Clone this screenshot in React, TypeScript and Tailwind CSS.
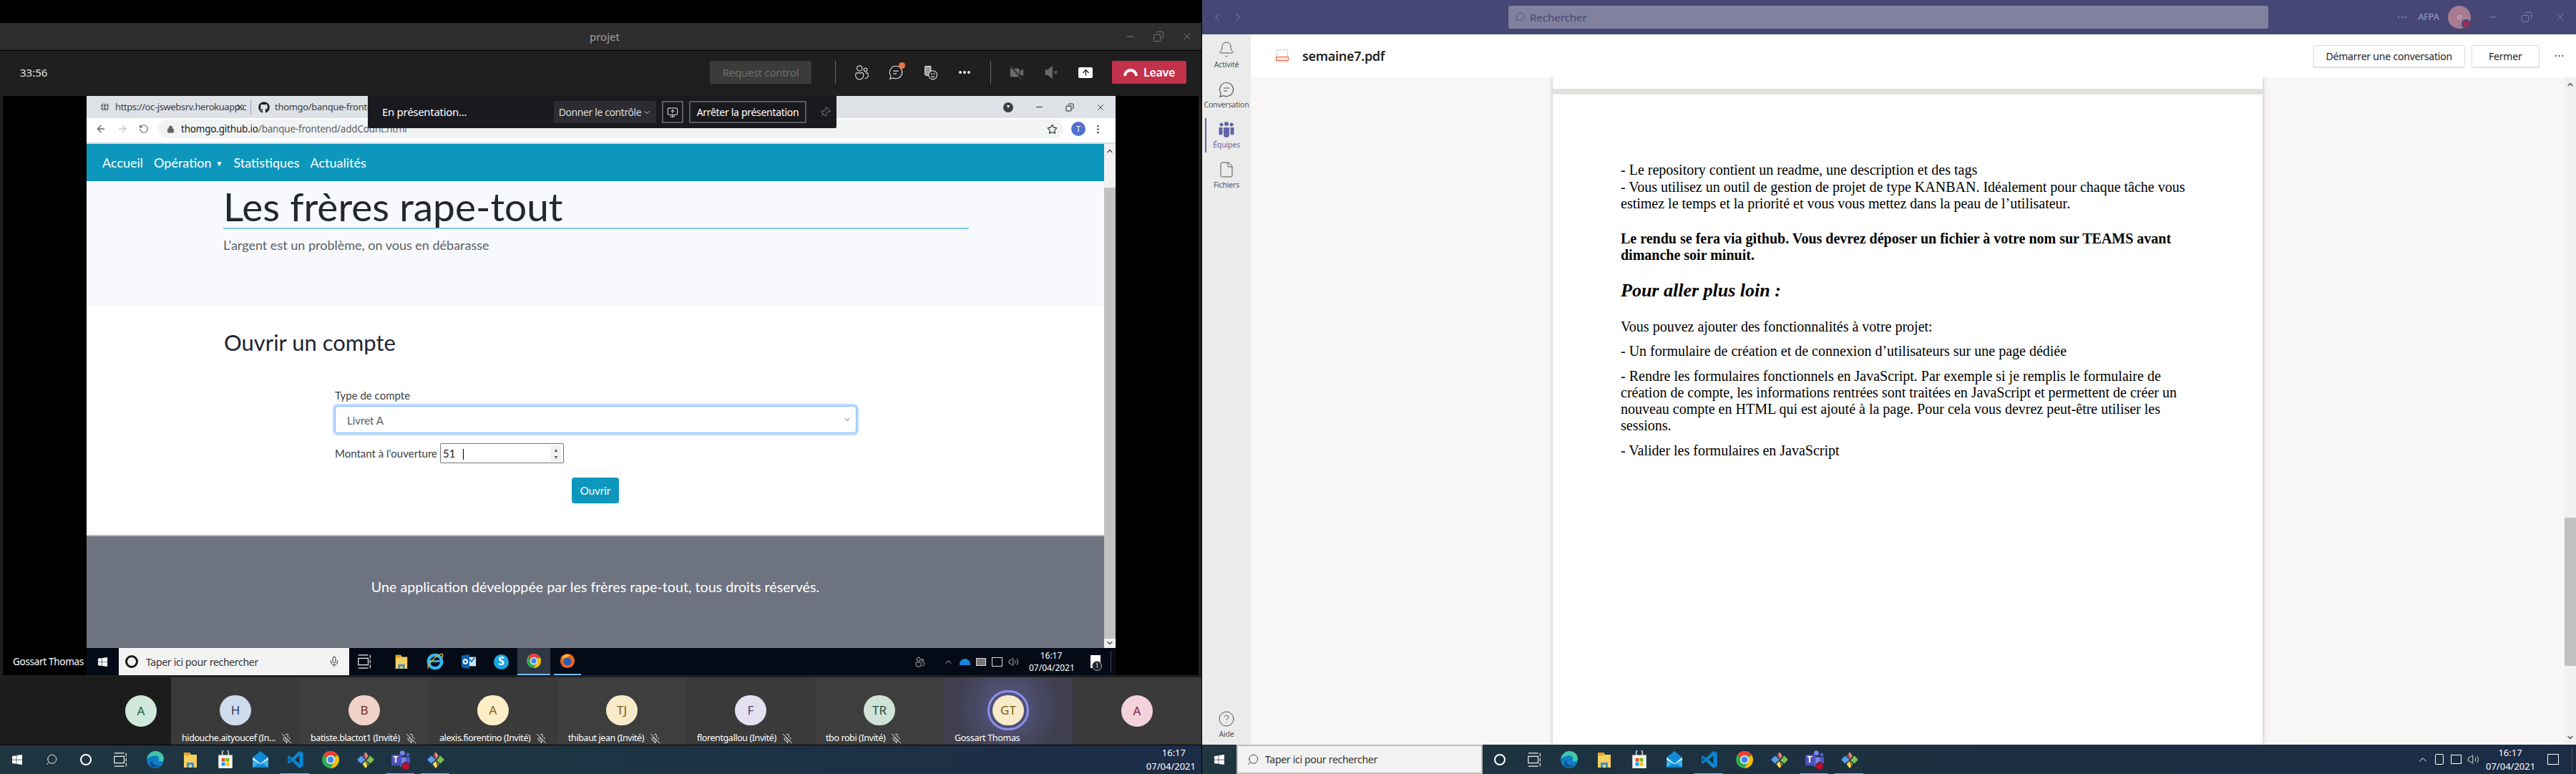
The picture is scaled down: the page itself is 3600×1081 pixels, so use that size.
import {
  ArrowLeft,
  ArrowRight,
  ArrowUp,
  Bell,
  ChevronDown,
  ChevronLeft,
  ChevronRight,
  ChevronUp,
  CircleHelp,
  Copy,
  EllipsisVertical,
  File,
  Globe,
  Lock,
  Mic,
  MicOff,
  Minus,
  MonitorUp,
  Pin,
  RotateCw,
  Search,
  Star,
  Volume2,
  X,
} from 'lucide-react';
import { FaGithub, FaWindows } from 'react-icons/fa';

type IconProps = { s?: number };

function PeopleIcon({ s = 22 }: IconProps) {
  return (
    <svg viewBox="0 0 24 24" width={s} height={s} fill="none" stroke="currentColor" strokeWidth="1.200">
      <circle cx="9" cy="6" r="4" />
      <circle cx="18" cy="8" r="2.500" />
      <path d="M3 15a2 2 0 0 1 2-2h8a2 2 0 0 1 2 2v2a6 6 0 0 1-12 0z" />
      <path d="M18 13h2.500a1.500 1.500 0 0 1 1.500 1.500V17a4 4 0 0 1-5 4" />
    </svg>
  );
}

function ChatIcon({ s = 22 }: IconProps) {
  return (
    <svg viewBox="0 0 24 24" width={s} height={s} fill="none" stroke="currentColor" strokeWidth="1.200">
      <path d="M12 2.500a9.500 9.500 0 1 1-4 18.100L3 22l1.400-4.500A9.500 9.500 0 0 1 12 2.500z" />
      <path d="M8 10h8M8 14h5" />
    </svg>
  );
}

function HandSmileIcon({ s = 22 }: IconProps) {
  return (
    <svg viewBox="0 0 24 24" width={s} height={s} fill="none" stroke="#e8e8e8" strokeWidth="1.200">
      <path d="M4 4a1.500 1.500 0 0 1 3 0 1.500 1.500 0 0 1 3 0 1.500 1.500 0 0 1 3 0v9a5 5 0 0 1-9 2z" fill="#9a9a9a" />
      <circle cx="16" cy="16" r="6.500" fill="#1f1f1f" />
      <circle cx="14" cy="14.500" r="0.500" />
      <circle cx="18" cy="14.500" r="0.500" />
      <path d="M13.500 18c1.500 1.200 3.500 1.200 5 0" />
    </svg>
  );
}

function CamOffIcon({ s = 22 }: IconProps) {
  return (
    <svg viewBox="0 0 24 24" width={s} height={s}>
      <rect x="2" y="6" width="14" height="13" rx="2" fill="#6a6a6a" />
      <path d="M17 10l5-3v11l-5-3z" fill="#6a6a6a" />
      <path d="M3 3l17 20" stroke="#1f1f1f" strokeWidth="2.400" />
      <path d="M2.500 3l17 20" stroke="#777" strokeWidth="0.900" />
    </svg>
  );
}

function SpeakerOffIcon({ s = 22 }: IconProps) {
  return (
    <svg viewBox="0 0 24 24" width={s} height={s}>
      <path d="M3 8h4l7-6v20l-7-6H3z" fill="#6a6a6a" />
      <path d="M17 10l4 4M21 10l-4 4" stroke="#777" strokeWidth="1.400" />
    </svg>
  );
}

function TeamGlyph({ s = 22 }: IconProps) {
  return (
    <svg viewBox="0 0 24 24" width={s} height={s} fill="#6264a7">
      <circle cx="5" cy="5" r="2.500" />
      <circle cx="12" cy="4" r="3" />
      <circle cx="19" cy="5" r="2.500" />
      <path d="M1.500 9h5v8a2.500 2.500 0 0 1-5 0z" />
      <path d="M8 9h8v10a4 4 0 0 1-8 0z" />
      <path d="M17.500 9h5v8a2.500 2.500 0 0 1-5 0z" />
    </svg>
  );
}

function ChromeIcon({ s = 24 }: IconProps) {
  return (
    <svg viewBox="0 0 24 24" width={s} height={s}>
      <circle cx="12" cy="12" r="11" fill="#34a853" />
      <path d="M12 1a11 11 0 0 1 9.500 5.500H12a5.500 5.500 0 0 0-5 3.200L3.300 5A11 11 0 0 1 12 1z" fill="#ea4335" />
      <path d="M21.500 6.500A11 11 0 0 1 12 23l4.700-8.200A5.500 5.500 0 0 0 16.800 9L21.500 6.500z" fill="#fbbc05" />
      <circle cx="12" cy="12" r="5.600" fill="#fff" />
      <circle cx="12" cy="12" r="4.200" fill="#4285f4" />
    </svg>
  );
}

function EdgeIcon({ s = 26 }: IconProps) {
  return (
    <svg viewBox="0 0 24 24" width={s} height={s}>
      <circle cx="12" cy="12" r="11" fill="#0f7cc4" />
      <path d="M1 12C2 5 8 1 12 1c6 0 11 4 11 10 0 3-3 4-6 3-1-2 0-3 0-4-1-3-4-4-7-3-5 1-8 3-9 5z" fill="#40c8a8" />
      <path d="M8 13c0 5 5 8 10 6-4 4-10 4-12 0-1-2 0-5 2-6z" fill="#0a4f8f" />
    </svg>
  );
}

function FolderIcon({ s = 24 }: IconProps) {
  return (
    <svg viewBox="0 0 24 24" width={s} height={s}>
      <path d="M3 2h8l2 3h8v18H3z" fill="#f6cf5e" />
      <path d="M3 2h8v4H3z" fill="#e0a325" />
      <path d="M7 23v-7h10v7h-3v-4h-4v4z" fill="#3b8ed0" />
    </svg>
  );
}

function StoreIcon({ s = 26 }: IconProps) {
  return (
    <svg viewBox="0 0 24 24" width={s} height={s}>
      <path d="M8 7V3a4 4 0 0 1 8 0v4" fill="none" stroke="#c8c8c8" strokeWidth="1.600" />
      <path d="M3 6h18v17H3z" fill="#f5f5f5" />
      <path d="M7 10h4.500v4.500H7z" fill="#f25022" />
      <path d="M12.500 10H17v4.500h-4.500z" fill="#7fba00" />
      <path d="M7 15.500h4.500V20H7z" fill="#00a4ef" />
      <path d="M12.500 15.500H17V20h-4.500z" fill="#ffb900" />
    </svg>
  );
}

function MailIcon({ s = 26 }: IconProps) {
  return (
    <svg viewBox="0 0 24 24" width={s} height={s}>
      <path d="M2 9l10-8 10 8v13H2z" fill="#0f8ad8" />
      <path d="M2 9l10 8 10-8v3l-10 6-10-6z" fill="#e8f6ff" />
      <path d="M2 12l7 5-7 5zM22 12l-7 5 7 5z" fill="#3db4f0" />
    </svg>
  );
}

function CodeIcon({ s = 26 }: IconProps) {
  return (
    <svg viewBox="0 0 24 24" width={s} height={s}>
      <path d="M17 1l5 2.500v17L17 23 7.500 14l-4 3L2 16V8l1.500-1 4 3z" fill="#0e84d0" />
      <path d="M17 7l-6 5 6 5z" fill="#1c2f3d" />
      <path d="M3.500 9.500L6 12l-2.500 2.500z" fill="#1c2f3d" />
    </svg>
  );
}

function GitIcon({ s = 26 }: IconProps) {
  return (
    <svg viewBox="0 0 24 24" width={s} height={s}>
      <path d="M12 2l3.500 5-3.500 5-3.500-5z" fill="#f07f7f" />
      <path d="M1 12l5-5 6 5-6 5z" fill="#5b9cf0" />
      <path d="M23 12l-5-5-6 5 6 5z" fill="#7cc24d" />
      <path d="M12 12l4 6-4 5-4-5z" fill="#f2d94e" />
      <path d="M9 3l6 18M16 9l-6 6" stroke="#3a3a3a" strokeWidth="1.200" />
    </svg>
  );
}

function TeamsIcon({ s = 28 }: IconProps) {
  return (
    <div className="relative" style={{ width: s, height: s }}>
      <svg viewBox="0 0 24 24" width={s} height={s}>
        <circle cx="14" cy="4" r="3" fill="#7b83eb" />
        <circle cx="20.500" cy="6" r="2.200" fill="#5059c9" />
        <path d="M11 9h7v10a4 4 0 0 1-7 0z" fill="#7b83eb" />
        <path d="M18 9h5v7a3 3 0 0 1-5 1z" fill="#5059c9" />
        <path d="M1 6h12v13H1z" fill="#4b53bc" />
      </svg>
      <span className="absolute left-[4px] top-[7px] text-[12px] leading-[14px] font-bold text-white">T</span>
      <span className="absolute right-[1px] bottom-[-1px] h-[12px] w-[12px] rounded-full bg-[#b80e2f] border border-[#1c2f3d]" />
    </div>
  );
}

function FirefoxIcon({ s = 24 }: IconProps) {
  return (
    <svg viewBox="0 0 24 24" width={s} height={s}>
      <circle cx="12" cy="12" r="11" fill="#e8632a" />
      <circle cx="12" cy="13" r="6" fill="#2d5bb0" />
      <path d="M4 6c3-4 9-5 13-2-3 0-5 1-6 3-3 0-6 0-7 3z" fill="#f7b733" />
    </svg>
  );
}

function IeIcon({ s = 26 }: IconProps) {
  return (
    <svg viewBox="0 0 24 24" width={s} height={s}>
      <circle cx="12" cy="12" r="8.500" fill="none" stroke="#37b6ee" strokeWidth="4" />
      <path d="M5 11.500h15" stroke="#37b6ee" strokeWidth="2.500" />
      <path d="M3 21C1 18 12 4 21 2c2 1 1 4-1 6" fill="none" stroke="#e6b93c" strokeWidth="1.300" />
    </svg>
  );
}

function OutlookIcon({ s = 24 }: IconProps) {
  return (
    <svg viewBox="0 0 24 24" width={s} height={s}>
      <path d="M10 5h13v14H10z" fill="#cfe6f8" />
      <path d="M12 8l4.500 4 4.500-6" fill="none" stroke="#0f6cbd" strokeWidth="2" />
      <path d="M1 3l12-2v22L1 21z" fill="#0f62b0" />
      <circle cx="7" cy="12" r="3" fill="none" stroke="#fff" strokeWidth="2" />
    </svg>
  );
}

function SkypeIcon({ s = 24 }: IconProps) {
  return (
    <div className="flex items-center justify-center rounded-full bg-[#18a7e0] text-white font-bold" style={{ width: s, height: s, fontSize: s * 0.75 }}>
      S
    </div>
  );
}

function TaskViewIcon() {
  return (
    <svg viewBox="0 0 24 24" width="22" height="22" fill="none" stroke="#f0f0f0" strokeWidth="1.300">
      <path d="M3 2h15M3 22h15M3 7h15v10H3zM21 2v5M21 9.500v5M21 17v5" />
    </svg>
  );
}

function TileMic() {
  return <MicOff size={15} className="shrink-0 text-[#e8e8e8]" strokeWidth={1.6} />;
}

const PEOPLE = [
  { name: 'hidouche.aityoucef (In...', short: 'H', bg: 'bg-[#cfdcec]', fg: 'text-[#243a5e]', tile: 'bg-[#3a3a3a]', mic: true },
  { name: 'batiste.blactot1 (Invité)', short: 'B', bg: 'bg-[#f0d2c9]', fg: 'text-[#6e2b1c]', tile: 'bg-[#3e3e3e]', mic: true },
  { name: 'alexis.fiorentino (Invité)', short: 'A', bg: 'bg-[#fbeec6]', fg: 'text-[#7d5c17]', tile: 'bg-[#3a3a3a]', mic: true },
  { name: 'thibaut jean (Invité)', short: 'TJ', bg: 'bg-[#f8ebc9]', fg: 'text-[#7d5c17]', tile: 'bg-[#3e3e3e]', mic: true },
  { name: 'florentgallou (Invité)', short: 'F', bg: 'bg-[#e3e0f0]', fg: 'text-[#4d4374]', tile: 'bg-[#3a3a3a]', mic: true },
  { name: 'tbo robi (Invité)', short: 'TR', bg: 'bg-[#d0e1d8]', fg: 'text-[#1f4f3c]', tile: 'bg-[#3e3e3e]', mic: true },
];

const PDF_TEXT = "font-['Liberation_Serif',serif] text-[20px] leading-[23px] text-black";

function LeftWindow() {
  return (
    <div className="flex h-full w-[1680px] shrink-0 flex-col bg-[#1f1f1f] border-r border-black">
      <div className="h-[32px] shrink-0 bg-black" />

      {/* title bar */}
      <div className="flex h-[39px] shrink-0 items-center border-b border-black bg-[#2d2d2d] pl-[824px] pr-[12px] text-[#a0a0a0]">
        <span className="text-[15px]">projet</span>
        <div className="ml-auto flex items-center gap-[24px]">
          <Minus size={16} strokeWidth={1} />
          <Copy size={16} strokeWidth={1} className="-scale-x-100" />
          <X size={16} strokeWidth={1} />
        </div>
      </div>

      {/* meeting toolbar */}
      <div className="flex h-[60px] shrink-0 items-center pl-[28px] text-white">
        <span className="w-[964px] text-[15px] text-[#e6e6e6]">33:56</span>
        <div className="flex h-[32px] w-[142px] items-center justify-center rounded-[2px] bg-[#3b3b3b] text-[15px] tracking-[-0.3px] text-[#6e6e6e]">
          Request control
        </div>
        <div className="ml-[33px] h-[32px] w-px shrink-0 bg-[#6b6b6b]" />
        <div className="ml-[12px] flex items-center text-[#e0e0e0]">
          <div className="flex w-[48px] justify-center"><PeopleIcon /></div>
          <div className="relative flex w-[48px] justify-center">
            <ChatIcon />
            <span className="absolute right-[11px] -top-[3px] h-[9px] w-[9px] rounded-full bg-[#e97548]" />
          </div>
          <div className="flex w-[48px] justify-center"><HandSmileIcon /></div>
          <div className="flex w-[48px] justify-center gap-[2px]">
            <span className="h-[4px] w-[4px] rounded-full bg-[#e8e8e8]" />
            <span className="h-[4px] w-[4px] rounded-full bg-[#e8e8e8]" />
            <span className="h-[4px] w-[4px] rounded-full bg-[#e8e8e8]" />
          </div>
        </div>
        <div className="ml-[12px] h-[32px] w-px shrink-0 bg-[#6b6b6b]" />
        <div className="ml-[12px] flex items-center">
          <div className="flex w-[48px] justify-center"><CamOffIcon /></div>
          <div className="flex w-[48px] justify-center"><SpeakerOffIcon /></div>
          <div className="flex w-[48px] justify-center">
            <div className="flex h-[15px] w-[20px] items-center justify-center rounded-[2px] bg-white text-black">
              <ArrowUp size={13} strokeWidth={2} />
            </div>
          </div>
        </div>
        <div className="ml-[13px] flex h-[32px] w-[104px] items-center justify-center gap-[8px] rounded-[2px] bg-[#c4314b] text-[16px] font-semibold tracking-[-0.3px] text-white">
          <span className="h-[10px] w-[20px] rounded-t-full border-[4px] border-b-0 border-white" />
          Leave
        </div>
      </div>

      <div className="h-[3px] shrink-0" />

      {/* shared screen */}
      <div className="relative flex h-[809px] shrink-0 bg-black ml-[4px] mr-[4px]">
        <div className="flex w-[117px] shrink-0 items-end pb-[10px] pl-[14px]">
          <span className="text-[13.500px] leading-[18px] tracking-[-0.3px] whitespace-nowrap text-white">Gossart Thomas</span>
        </div>
        <SharedBrowser />
        <PresenterBar />
      </div>

      <div className="h-[3px] shrink-0" />

      {/* participants */}
      <div className="flex h-[94px] shrink-0 bg-[#1c1c1c] text-white">
        <div className="flex w-[239px] shrink-0 justify-end pr-[20px] pt-[25px]">
          <div className="flex h-[44px] w-[44px] items-center justify-center rounded-full bg-[#d0e8dc] text-[17px] text-[#23563f]">A</div>
        </div>
        {PEOPLE.map((p) => (
          <div key={p.name} className={`flex w-[180px] shrink-0 flex-col items-center pt-[25px] ${p.tile}`}>
            <div className={`flex h-[44px] w-[44px] items-center justify-center rounded-full text-[17px] ${p.bg} ${p.fg}`}>{p.short}</div>
            <div className="mt-[9px] flex w-full items-center gap-[8px] pl-[15px] text-[12.500px] leading-[18px] whitespace-nowrap tracking-[-0.4px]">
              <span>{p.name}</span>
              <TileMic />
            </div>
          </div>
        ))}
        <div className="relative flex w-[180px] shrink-0 flex-col items-center bg-[radial-gradient(circle_at_50%_45%,#5a5a88,#3f3f50_70%)] pt-[25px]">
          <div className="flex h-[44px] w-[44px] items-center justify-center rounded-full bg-[#f8ebc9] text-[17px] text-[#7d5c17] outline-[3px] outline-[#8e90f0] outline-offset-[4px]">GT</div>
          <div className="mt-[9px] w-full pl-[15px] text-[12.500px] leading-[18px] tracking-[-0.3px]">Gossart Thomas</div>
        </div>
        <div className="flex flex-1 justify-center bg-[#3a3a3a] pt-[25px]">
          <div className="flex h-[44px] w-[44px] items-center justify-center rounded-full bg-[#f4d2dc] text-[17px] text-[#7b1b3b]">A</div>
        </div>
      </div>

      <div className="h-px shrink-0 bg-black" />

      {/* local taskbar */}
      <div className="flex h-[40px] shrink-0 items-center bg-gradient-to-r from-[#1f3540] via-[#1d3444] to-[#1c2c47] text-white">
        <div className="flex w-[48px] justify-center"><FaWindows size={16} /></div>
        <div className="flex w-[48px] justify-center"><Search size={18} strokeWidth={1.2} className="-scale-x-100" /></div>
        <div className="flex w-[48px] justify-center"><span className="h-[16px] w-[16px] rounded-full border-[2px] border-white" /></div>
        <div className="flex w-[48px] justify-center"><TaskViewIcon /></div>
        <TaskIcons />
        <div className="ml-auto w-[90px] pr-[8px] text-right text-[13px] leading-[19px]">
          <div className="pr-[14px]">16:17</div>
          <div>07/04/2021</div>
        </div>
      </div>
    </div>
  );
}

function TaskIcons() {
  return (
    <div className="flex items-center">
      <div className="flex w-[49px] justify-center"><EdgeIcon /></div>
      <div className="flex w-[49px] justify-center"><FolderIcon /></div>
      <div className="flex w-[49px] justify-center"><StoreIcon /></div>
      <div className="flex w-[49px] justify-center"><MailIcon /></div>
      <div className="relative flex w-[49px] justify-center">
        <CodeIcon />
        <span className="absolute -bottom-[8px] left-[4px] h-[2px] w-[40px] bg-[#76b9ed]" />
      </div>
      <div className="flex w-[49px] justify-center"><ChromeIcon s={26} /></div>
      <div className="flex w-[49px] justify-center"><GitIcon /></div>
      <div className="relative flex w-[49px] justify-center">
        <TeamsIcon />
        <span className="absolute -bottom-[7px] left-[4px] h-[2px] w-[40px] bg-[#76b9ed]" />
      </div>
      <div className="relative flex w-[49px] justify-center">
        <GitIcon />
        <span className="absolute -bottom-[8px] left-[4px] h-[2px] w-[40px] bg-[#76b9ed]" />
      </div>
    </div>
  );
}

function SharedBrowser() {
  return (
    <div className="flex h-full w-[1438px] shrink-0 flex-col">
      {/* tabs */}
      <div className="flex h-[31px] shrink-0 items-center bg-[#dee1e6] pl-[18px] pr-[14px] text-[#3c4043]">
        <Globe size={15} fill="#5f6368" stroke="#dee1e6" />
        <span className="ml-[7px] w-[163px] whitespace-nowrap text-[13px] tracking-[-0.4px]">https://oc-jswebsrv.herokuapp.c</span>
        <X size={13} className="ml-[5px]" strokeWidth={2} />
        <div className="ml-[8px] h-[20px] w-px bg-[#9aa0a6]" />
        <FaGithub size={16} className="ml-[10px] text-[#202124]" />
        <span className="ml-[7px] text-[13px] tracking-[-0.3px]">thomgo/banque-frontend</span>
        <div className="ml-auto flex items-center gap-[30px] text-[#202124]">
          <span className="flex h-[14px] w-[14px] items-center justify-center rounded-full bg-[#3c4043] text-[7px] text-white">▼</span>
          <Minus size={13} />
          <Copy size={12} strokeWidth={2} className="-scale-x-100" />
          <X size={14} strokeWidth={1.4} />
        </div>
      </div>
      {/* address bar */}
      <div className="flex h-[30px] shrink-0 items-center bg-white pl-[12px] pr-[12px] text-[#5f6368]">
        <ArrowLeft size={16} />
        <ArrowRight size={16} className="ml-[14px] text-[#c4c7cc]" />
        <RotateCw size={14} className="ml-[15px] -scale-x-100" />
        <div className="ml-[13px] flex h-[26px] w-[1265px] items-center rounded-full bg-[#f1f3f4] pl-[12px] pr-[8px]">
          <Lock size={11} fill="#5f6368" />
          <span className="ml-[9px] text-[13.500px] tracking-[-0.2px] text-[#202124]">thomgo.github.io</span>
          <span className="text-[13.500px] tracking-[-0.2px] text-[#5f6368]">/banque-frontend/addCount.html</span>
          <Star size={15} className="ml-auto text-[#3c4043]" />
        </div>
        <div className="ml-[11px] flex h-[20px] w-[20px] items-center justify-center rounded-full bg-[#5470cf] text-[11px] text-white">T</div>
        <EllipsisVertical size={15} className="ml-[10px] text-[#3c4043]" />
      </div>
      <div className="h-[6px] shrink-0 bg-white border-b-[2px] border-[#cddfe6]" />

      <div className="flex h-[704px] shrink-0">
        <div className="flex w-[1422px] shrink-0 flex-col font-['Lato',sans-serif]">
          {/* site nav */}
          <div className="flex h-[52px] shrink-0 items-center gap-[15px] bg-[#0d97bd] pl-[22px] text-[18px] text-white">
            <span>Accueil</span>
            <span>Opération<span className="ml-[6px] text-[10px] align-[2px]">▼</span></span>
            <span>Statistiques</span>
            <span>Actualités</span>
          </div>
          {/* jumbotron */}
          <div className="h-[174px] shrink-0 bg-[#f8f9fc] pl-[191px] pt-[8px]">
            <div className="w-[1042px] border-b-[2px] border-[#7ccde0] pb-[3px] text-[55px] leading-[54px] text-[#23272e]">Les frères rape-tout</div>
            <div className="mt-[10px] text-[18px] leading-[24px] text-[#5a6068]">L'argent est un problème, on vous en débarasse</div>
          </div>
          {/* form */}
          <div className="h-[320px] shrink-0 bg-white pl-[192px] pt-[32px]">
            <div className="text-[31px] leading-[38px] text-[#1f2430]">Ouvrir un compte</div>
            <div className="mt-[44px] pl-[155px] font-['Lato',sans-serif] text-[#3d4248]">
              <div className="text-[15px] leading-[22px]">Type de compte</div>
              <div className="mt-[4px] flex h-[38px] w-[729px] items-center justify-between rounded-[4px] border border-[#80bdff] bg-white pl-[16px] pr-[6px] text-[15px] text-[#565c63] shadow-[0_0_0_3px_#bfdcff]">
                <span className="pt-[3px]">Livret A</span>
                <ChevronDown size={12} strokeWidth={2} />
              </div>
              <div className="mt-[14px] flex items-center gap-[4px] text-[15px]">
                <span>Montant à l'ouverture</span>
                <div className="relative flex h-[28px] w-[173px] items-center justify-between rounded-[2px] border border-[#767676] pl-[3px] pr-[3px] text-[#202124]">
                  51
                  <span className="flex h-[22px] w-[14px] flex-col items-center justify-center bg-[#f0f0f0] text-[7px] leading-[10px] text-[#505050]"><span>▲</span><span>▼</span></span>
                  <span className="absolute left-[31px] top-[7px] h-[15px] w-px bg-black" />
                </div>
              </div>
              <div className="ml-[331px] mt-[20px] flex h-[36px] w-[66px] items-center justify-center rounded-[4px] bg-[#0d97bd] text-[15px] text-white">Ouvrir</div>
            </div>
          </div>
          {/* footer */}
          <div className="flex h-[158px] shrink-0 items-center justify-center border-t-[2px] border-[#b4b8bd] bg-[#6e7380] text-[19.700px] text-white pb-[14px]">
            Une application développée par les frères rape-tout, tous droits réservés.
          </div>
        </div>
        {/* remote scrollbar */}
        <div className="flex w-[16px] shrink-0 flex-col items-center bg-[#f1f1f1] text-[#505050]">
          <ChevronUp size={12} strokeWidth={3} className="mt-[4px]" />
          <div className="mt-[45px] h-[630px] w-full shrink-0 bg-[#c1c1c1]" />
          <ChevronDown size={12} strokeWidth={3} />
        </div>
      </div>

      {/* remote taskbar */}
      <div className="flex h-[38px] shrink-0 items-center bg-[#050b16] text-white">
        <div className="flex w-[45px] justify-center"><FaWindows size={15} /></div>
        <div className="flex h-full w-[322px] items-center bg-[#f3f3f3] pl-[9px] pr-[13px] text-[#333]">
          <span className="h-[18px] w-[18px] rounded-full border-[3px] border-[#1a1a1a]" />
          <span className="ml-[11px] text-[14px] tracking-[-0.3px]">Taper ici pour rechercher</span>
          <Mic size={16} className="ml-auto" strokeWidth={1.5} />
        </div>
        <div className="flex w-[42px] justify-center"><TaskViewIcon /></div>
        <div className="ml-[8px] flex w-[46px] justify-center"><FolderIcon s={22} /></div>
        <div className="flex w-[47px] justify-center"><IeIcon /></div>
        <div className="flex w-[47px] justify-center"><OutlookIcon s={22} /></div>
        <div className="flex w-[45px] justify-center"><SkypeIcon s={21} /></div>
        <div className="flex h-full w-[46px] items-center justify-center border-b-[2px] border-[#76b9ed] bg-[#2f3744]"><ChromeIcon s={22} /></div>
        <div className="ml-[5px] flex h-full w-[38px] items-center justify-center border-b-[2px] border-[#76b9ed]"><FirefoxIcon s={22} /></div>
        <div className="ml-auto flex items-center gap-[8px] pr-[6px] text-[#e8e8e8]">
          <PeopleIcon s={15} />
          <ChevronUp size={15} strokeWidth={1.3} className="ml-[17px]" />
          <span className="h-[9px] w-[15px] rounded-t-full bg-[#1684d8]" />
          <span className="h-[11px] w-[14px] border border-[#ddd] bg-[#777]" />
          <span className="h-[13px] w-[15px] border border-[#ddd]" />
          <Volume2 size={15} strokeWidth={1.2} />
          <div className="ml-[6px] w-[62px] text-center text-[12px] leading-[17px] text-white">
            <div>16:17</div>
            <div className="whitespace-nowrap">07/04/2021</div>
          </div>
          <div className="relative ml-[16px] h-[18px] w-[14px] bg-white">
            <span className="absolute -bottom-[4px] -right-[2px] flex h-[14px] w-[14px] items-center justify-center rounded-full border border-[#aaa] bg-[#222] text-[9px]">1</span>
          </div>
          <div className="ml-[6px] h-[30px] w-px bg-[#444]" />
        </div>
      </div>
    </div>
  );
}

function PresenterBar() {
  return (
    <div className="absolute left-[510px] top-0 flex h-[45px] w-[655px] items-center rounded-b-[2px] bg-[#1a191e] pl-[20px] text-white">
      <span className="w-[240px] text-[15px] tracking-[-0.3px]">En présentation...</span>
      <div className="flex h-[31px] w-[143px] items-center justify-center rounded-[2px] bg-[#2d2c33] text-[14px] tracking-[-0.4px] text-[#dcdcdc] whitespace-nowrap">
        Donner le contrôle
        <ChevronDown size={12} className="ml-[2px]" />
      </div>
      <div className="ml-[8px] flex h-[31px] w-[30px] items-center justify-center border-[2px] border-[#5a5a5a]">
        <MonitorUp size={16} strokeWidth={1.4} />
      </div>
      <div className="ml-[8px] flex h-[31px] w-[164px] items-center justify-center border-[2px] border-[#5a5a5a] text-[14px] tracking-[-0.3px] whitespace-nowrap">
        Arrêter la présentation
      </div>
      <Pin size={16} strokeWidth={1} className="ml-[18px] rotate-45 text-[#bbb]" />
    </div>
  );
}

function RailItem({ label, active, children }: { label: string; active?: boolean; children: React.ReactNode }) {
  return (
    <div className={`relative flex h-[56px] flex-col items-center justify-center gap-[2px] ${active ? 'text-[#6264a7]' : 'text-[#555]'}`}>
      {active && <span className="absolute left-[4px] top-[4px] h-[48px] w-[2px] bg-[#6264a7]" />}
      {children}
      <span className="text-[10.500px] leading-[14px] tracking-[-0.2px]">{label}</span>
    </div>
  );
}

function RightWindow() {
  return (
    <div className="flex h-full w-[1920px] shrink-0 flex-col">
      {/* teams title bar */}
      <div className="flex h-[48px] shrink-0 items-center bg-[#464775] pl-[12px] pr-[14px] text-[#9c9dbb]">
        <ChevronLeft size={18} strokeWidth={1} />
        <ChevronRight size={18} strokeWidth={1} className="ml-[11px]" />
        <div className="ml-[369px] flex h-[32px] w-[1062px] items-center rounded-[3px] bg-[#81819f] pl-[8px] text-[15px] text-[#46476f]">
          <Search size={16} strokeWidth={1.2} className="-scale-x-100" />
          <span className="ml-[6px]">Rechercher</span>
        </div>
        <span className="ml-[180px] text-[14px] leading-none tracking-[1px]">···</span>
        <span className="ml-[15px] text-[13px] tracking-[-0.3px]">AFPA</span>
        <div className="relative ml-[12px] flex h-[32px] w-[32px] items-center justify-center rounded-full bg-[#a77b92]">
          <span className="h-[6px] w-[6px] rounded-full border border-[#d7c3cd]" />
          <span className="absolute bottom-0 right-0 h-[13px] w-[13px] rounded-full border-[2px] border-[#464775] bg-[#9b2d55]" />
        </div>
        <div className="ml-auto flex items-center gap-[31px]">
          <Minus size={16} strokeWidth={1} />
          <Copy size={16} strokeWidth={1} className="-scale-x-100" />
          <X size={16} strokeWidth={1} />
        </div>
      </div>

      <div className="flex h-[992px] shrink-0">
        {/* rail */}
        <div className="flex w-[68px] shrink-0 flex-col bg-[#ebebeb] pt-[1px]">
          <RailItem label="Activité"><Bell size={24} strokeWidth={1} /></RailItem>
          <RailItem label="Conversation"><ChatIcon s={24} /></RailItem>
          <RailItem label="Équipes" active><TeamGlyph s={24} /></RailItem>
          <RailItem label="Fichiers"><File size={24} strokeWidth={1} /></RailItem>
          <div className="mt-auto">
            <RailItem label="Aide"><CircleHelp size={24} strokeWidth={1} /></RailItem>
          </div>
        </div>

        <div className="flex min-w-0 flex-1 flex-col">
          {/* file header */}
          <div className="flex h-[60px] shrink-0 items-center bg-white pl-[36px] pr-[16px]">
            <div className="relative h-[18px] w-[16px] border border-[#d0d0d0] bg-white">
              <span className="absolute left-[-2px] top-[9px] h-[6px] w-[18px] border border-[#e8623d] bg-[#fbe3db]" />
            </div>
            <span className="ml-[20px] text-[18px] font-semibold tracking-[-0.3px] text-[#252423]">semaine7.pdf</span>
            <div className="ml-auto flex items-center gap-[9px] text-[14px] tracking-[-0.2px] text-[#252423]">
              <div className="flex h-[31px] w-[212px] items-center justify-center rounded-[2px] border border-[#dcdcdc] bg-white shadow-[0_1px_2px_rgba(0,0,0,0.1)]">Démarrer une conversation</div>
              <div className="flex h-[31px] w-[95px] items-center justify-center rounded-[2px] border border-[#dcdcdc] bg-white shadow-[0_1px_2px_rgba(0,0,0,0.1)]">Fermer</div>
              <span className="ml-[12px] text-[14px] leading-none tracking-[1px]">···</span>
            </div>
          </div>

          {/* pdf viewer */}
          <div className="flex h-[932px] min-h-0 shrink-0 overflow-hidden bg-[#f8f7f5]">
            <div className="ml-[422px] flex w-[992px] shrink-0 flex-col shadow-[0_0_6px_rgba(0,0,0,0.25)]">
              <div className="h-[16px] shrink-0 bg-white" />
              <div className="h-[8px] shrink-0 bg-[#e2e1df]" />
              <div className="flex-1 bg-white pl-[95px] pr-[97px] pt-[94px]">
                <div className={PDF_TEXT}>- Le repository contient un readme, une description et des tags</div>
                <div className={`${PDF_TEXT} mt-[1px]`}>- Vous utilisez un outil de gestion de projet de type KANBAN. Idéalement pour chaque tâche vous estimez le temps et la priorité et vous vous mettez dans la peau de l’utilisateur.</div>
                <div className={`${PDF_TEXT} mt-[26px] font-bold`}>Le rendu se fera via github. Vous devrez déposer un fichier à votre nom sur TEAMS avant dimanche soir minuit.</div>
                <div className="mt-[22px] font-['Liberation_Serif',serif] text-[26px] leading-[32px] font-bold italic text-black">Pour aller plus loin :</div>
                <div className={`${PDF_TEXT} mt-[23px]`}>Vous pouvez ajouter des fonctionnalités à votre projet:</div>
                <div className={`${PDF_TEXT} mt-[11px]`}>- Un formulaire de création et de connexion d’utilisateurs sur une page dédiée</div>
                <div className={`${PDF_TEXT} mt-[12px]`}>- Rendre les formulaires fonctionnels en JavaScript. Par exemple si je remplis le formulaire de création de compte, les informations rentrées sont traitées en JavaScript et permettent de créer un nouveau compte en HTML qui est ajouté à la page. Pour cela vous devrez peut-être utiliser les sessions.</div>
                <div className={`${PDF_TEXT} mt-[12px]`}>- Valider les formulaires en JavaScript</div>
              </div>
            </div>
            <div className="ml-auto flex w-[16px] shrink-0 flex-col items-center bg-[#f1f1f1] text-[#505050]">
              <ChevronUp size={12} strokeWidth={3} className="mt-[4px]" />
              <div className="mt-[599px] h-[207px] w-full shrink-0 bg-[#c1c1c1]" />
              <ChevronDown size={12} strokeWidth={3} className="mt-[94px]" />
            </div>
          </div>
        </div>
      </div>

      {/* second monitor taskbar */}
      <div className="flex h-[41px] shrink-0 items-center bg-gradient-to-r from-[#1f3540] via-[#1c3040] to-[#1c2c47] text-white">
        <div className="flex w-[48px] justify-center"><FaWindows size={16} /></div>
        <div className="flex h-full w-[344px] items-center border-[2px] border-[#bdbdbd] bg-[#f2f2f2] pl-[12px] text-[#333]">
          <Search size={18} strokeWidth={1.2} className="-scale-x-100" />
          <span className="ml-[8px] text-[14px] tracking-[-0.3px]">Taper ici pour rechercher</span>
        </div>
        <div className="flex w-[48px] justify-center"><span className="h-[16px] w-[16px] rounded-full border-[2px] border-white" /></div>
        <div className="flex w-[48px] justify-center"><TaskViewIcon /></div>
        <TaskIcons />
        <div className="ml-auto flex items-center">
          <ChevronUp size={18} strokeWidth={1.3} />
          <span className="ml-[8px] h-[15px] w-[12px] rounded-[2px] border border-white" />
          <span className="ml-[10px] h-[13px] w-[15px] border border-white" />
          <Volume2 size={17} strokeWidth={1.2} className="ml-[8px]" />
          <div className="ml-[9px] w-[68px] text-center text-[13px] leading-[19px]">
            <div>16:17</div>
            <div className="whitespace-nowrap">07/04/2021</div>
          </div>
          <div className="ml-[18px] h-[15px] w-[16px] border border-white" />
          <div className="ml-[18px] mr-[5px] h-[34px] w-px bg-[#555]" />
        </div>
      </div>
    </div>
  );
}

export default function App() {
  return (
    <div className="flex h-[1081px] w-[3600px] overflow-hidden bg-black font-['Noto_Sans',sans-serif]">
      <LeftWindow />
      <RightWindow />
    </div>
  );
}
